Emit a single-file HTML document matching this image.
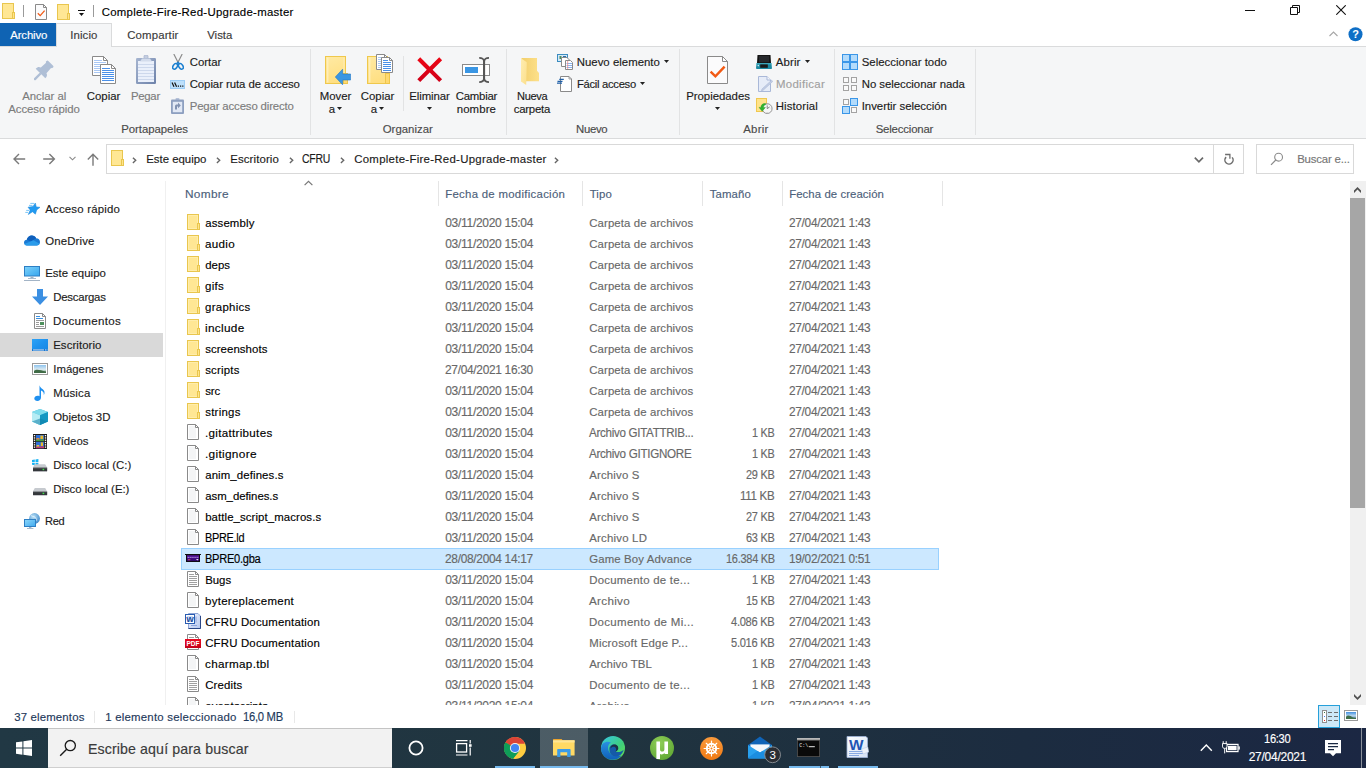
<!DOCTYPE html>
<html lang="es"><head><meta charset="utf-8"><title>Complete-Fire-Red-Upgrade-master</title>
<style>
html,body{margin:0;padding:0;}
body{width:1366px;height:768px;overflow:hidden;background:#fff;position:relative;font-family:'Liberation Sans',sans-serif;}
#root{position:absolute;left:0;top:0;width:1366px;height:768px;overflow:hidden;}
#root div,#root svg{position:absolute;}
.sec{left:0;top:0;width:0;height:0;}
.t{position:absolute;white-space:pre;line-height:normal;-webkit-text-stroke:0.15px currentColor;}
#list{left:166px;top:181px;width:1184px;height:524px;overflow:hidden;}
#listin{left:-166px;top:-181px;width:1366px;height:768px;}
</style></head><body><div id="root">
<div class="sec" id="titlebar">
<span class="t" style="left:101.70px;top:6px;font-size:11.4px;color:#000;letter-spacing:0.282px;">Complete-Fire-Red-Upgrade-master</span>
<svg style="left:2px;top:3px" width="13" height="16" viewBox="0 0 13 16" ><rect x="0.5" y="0.5" width="11" height="15" fill="#ffe794" stroke="#e9c64e"/><rect x="10.5" y="9.5" width="2" height="6" fill="#ffe48a" stroke="#e9c64e"/></svg>
<div style="left:23px;top:5px;width:1px;height:12px;background:#9a9a9a"></div>
<svg style="left:35px;top:4px" width="12" height="16" viewBox="0 0 12 16" ><path d="M0.5 0.5H8.5L11.5 3.5V15.5H0.5Z" fill="#fbfbfc" stroke="#8a8a8a"/><path d="M8.5 0.5V3.5H11.5Z" fill="#fff" stroke="#8a8a8a" stroke-linejoin="round"/><path d="M2.8 9.2L5.2 11.6L9.6 6.6" fill="none" stroke="#f25a14" stroke-width="1.3"/></svg>
<svg style="left:57px;top:4px" width="13" height="16" viewBox="0 0 13 16" ><rect x="0.5" y="0.5" width="11" height="15" fill="#ffe794" stroke="#e9c64e"/><rect x="10.5" y="9.5" width="2" height="6" fill="#ffe48a" stroke="#e9c64e"/></svg>
<div style="left:78px;top:10px;width:7px;height:1px;background:#111"></div>
<svg style="left:79px;top:13px" width="5" height="3" viewBox="0 0 5 3" ><path d="M0 0H5L2.5 3Z" fill="#111"/></svg>
<div style="left:93px;top:5px;width:1px;height:12px;background:#9a9a9a"></div>
<div style="left:1245px;top:10px;width:10px;height:1px;background:#111"></div>
<svg style="left:1290px;top:5px" width="10" height="10" viewBox="0 0 10 10" ><path d="M0.5 2.5H7.5V9.5H0.5Z" fill="none" stroke="#111"/><path d="M2.5 2.5V0.5H9.5V7.5H7.5" fill="none" stroke="#111"/></svg>
<svg style="left:1336px;top:5px" width="10" height="10" viewBox="0 0 10 10" ><path d="M0.3 0.3L9.7 9.7M9.7 0.3L0.3 9.7" stroke="#111" stroke-width="1.1"/></svg>
</div>
<div class="sec" id="ribbon">
<div style="left:0px;top:23px;width:56px;height:23px;background:#0f63b3;"></div>
<div style="left:0px;top:46px;width:1366px;height:1px;background:#dadbdc;"></div>
<div style="left:0px;top:47px;width:1366px;height:91px;background:#f5f6f7;"></div>
<div style="left:56px;top:23px;width:56px;height:24px;background:#f5f6f7;border:1px solid #dadbdc;border-bottom:none;box-sizing:border-box;"></div>
<div style="left:0px;top:138px;width:1366px;height:1px;background:#dadbdc;"></div>
<div style="left:310px;top:49px;width:1px;height:86px;background:#e2e3e4;"></div>
<div style="left:506px;top:49px;width:1px;height:86px;background:#e2e3e4;"></div>
<div style="left:679px;top:49px;width:1px;height:86px;background:#e2e3e4;"></div>
<div style="left:834px;top:49px;width:1px;height:86px;background:#e2e3e4;"></div>
<div style="left:975px;top:49px;width:1px;height:86px;background:#e2e3e4;"></div>
<div style="left:403px;top:56px;width:1px;height:55px;background:#e2e3e4;"></div>
<span class="t" style="left:10.20px;top:29px;font-size:11.4px;color:#fff;letter-spacing:-0.131px;">Archivo</span>
<span class="t" style="left:70.20px;top:29px;font-size:11.4px;color:#3a3a3a;letter-spacing:0.121px;">Inicio</span>
<span class="t" style="left:127.20px;top:29px;font-size:11.4px;color:#3a3a3a;letter-spacing:0.148px;">Compartir</span>
<span class="t" style="left:207.20px;top:29px;font-size:11.4px;color:#3a3a3a;letter-spacing:0.019px;">Vista</span>
<span class="t" style="left:22.20px;top:90px;font-size:11.4px;color:#7c7c7c;letter-spacing:-0.016px;">Anclar al</span>
<span class="t" style="left:8.20px;top:103px;font-size:11.4px;color:#7c7c7c;letter-spacing:-0.041px;">Acceso rápido</span>
<span class="t" style="left:86.70px;top:90px;font-size:11.4px;color:#1b1b1b;letter-spacing:0.028px;">Copiar</span>
<span class="t" style="left:131.20px;top:90px;font-size:11.4px;color:#7c7c7c;letter-spacing:-0.3px;transform:scaleX(0.9998);transform-origin:0 0;">Pegar</span>
<span class="t" style="left:189.70px;top:56px;font-size:11.4px;color:#1b1b1b;letter-spacing:0.009px;">Cortar</span>
<span class="t" style="left:189.70px;top:78px;font-size:11.4px;color:#1b1b1b;letter-spacing:-0.062px;">Copiar ruta de acceso</span>
<span class="t" style="left:189.70px;top:100px;font-size:11.4px;color:#7c7c7c;letter-spacing:-0.148px;">Pegar acceso directo</span>
<span class="t" style="left:121.20px;top:123px;font-size:11.4px;color:#4a4a4a;letter-spacing:-0.04px;">Portapapeles</span>
<span class="t" style="left:319.70px;top:90px;font-size:11.4px;color:#1b1b1b;letter-spacing:0.011px;">Mover</span>
<span class="t" style="left:328.70px;top:103px;font-size:11.4px;color:#1b1b1b;">a</span>
<span class="t" style="left:360.70px;top:90px;font-size:11.4px;color:#1b1b1b;letter-spacing:0.028px;">Copiar</span>
<span class="t" style="left:370.70px;top:103px;font-size:11.4px;color:#1b1b1b;">a</span>
<span class="t" style="left:409.20px;top:90px;font-size:11.4px;color:#1b1b1b;letter-spacing:-0.065px;">Eliminar</span>
<span class="t" style="left:455.70px;top:90px;font-size:11.4px;color:#1b1b1b;letter-spacing:-0.224px;">Cambiar</span>
<span class="t" style="left:456.70px;top:103px;font-size:11.4px;color:#1b1b1b;letter-spacing:0.115px;">nombre</span>
<span class="t" style="left:382.70px;top:123px;font-size:11.4px;color:#4a4a4a;letter-spacing:0.023px;">Organizar</span>
<span class="t" style="left:516.70px;top:90px;font-size:11.4px;color:#1b1b1b;letter-spacing:-0.3px;transform:scaleX(0.9673);transform-origin:0 0;">Nueva</span>
<span class="t" style="left:513.70px;top:103px;font-size:11.4px;color:#1b1b1b;letter-spacing:-0.217px;">carpeta</span>
<span class="t" style="left:576.70px;top:56px;font-size:11.4px;color:#1b1b1b;letter-spacing:0.019px;">Nuevo elemento</span>
<span class="t" style="left:576.70px;top:78px;font-size:11.4px;color:#1b1b1b;letter-spacing:-0.3px;transform:scaleX(0.9865);transform-origin:0 0;">Fácil acceso</span>
<span class="t" style="left:575.70px;top:123px;font-size:11.4px;color:#4a4a4a;letter-spacing:-0.3px;transform:scaleX(0.9988);transform-origin:0 0;">Nuevo</span>
<span class="t" style="left:686.20px;top:90px;font-size:11.4px;color:#1b1b1b;letter-spacing:-0.027px;">Propiedades</span>
<span class="t" style="left:775.70px;top:56px;font-size:11.4px;color:#1b1b1b;letter-spacing:0.159px;">Abrir</span>
<span class="t" style="left:775.70px;top:78px;font-size:11.4px;color:#a0a0a0;letter-spacing:0.3px;transform:scaleX(1.0017);transform-origin:0 0;">Modificar</span>
<span class="t" style="left:775.70px;top:100px;font-size:11.4px;color:#1b1b1b;letter-spacing:0.13px;">Historial</span>
<span class="t" style="left:743.20px;top:123px;font-size:11.4px;color:#4a4a4a;letter-spacing:0.284px;">Abrir</span>
<span class="t" style="left:861.70px;top:56px;font-size:11.4px;color:#1b1b1b;letter-spacing:0.023px;">Seleccionar todo</span>
<span class="t" style="left:861.70px;top:78px;font-size:11.4px;color:#1b1b1b;letter-spacing:-0.037px;">No seleccionar nada</span>
<span class="t" style="left:861.70px;top:100px;font-size:11.4px;color:#1b1b1b;letter-spacing:-0.016px;">Invertir selección</span>
<span class="t" style="left:875.70px;top:123px;font-size:11.4px;color:#4a4a4a;letter-spacing:-0.183px;">Seleccionar</span>
<svg style="left:1329px;top:31px" width="9" height="6" viewBox="0 0 9 6" ><path d="M0.5 5L4.5 1L8.5 5" fill="none" stroke="#a6a6a6" stroke-width="1.1"/></svg>
<svg style="left:1347.5px;top:27px" width="15" height="15" viewBox="0 0 15 15" ><circle cx="7.5" cy="7.2" r="7" fill="#0f6fc6"/><text x="7.5" y="11.2" text-anchor="middle" font-family="Liberation Sans,sans-serif" font-weight="bold" font-size="11" fill="#fff">?</text></svg>
<svg style="left:34px;top:60px" width="24" height="24" viewBox="0 0 24 24" ><g transform="translate(16.7,3.3) rotate(45)" fill="#afbfd6"><rect x="-4.6" y="0" width="9.2" height="3" rx="1.2"/><path d="M-3.6 2.5H3.6L4 10C5.8 10.5 6.8 11.8 6.8 14.4H-6.8C-6.8 11.8 -5.8 10.5 -4 10Z"/><rect x="-1.2" y="14" width="2.4" height="9.4" rx="1.1"/></g></svg>
<svg style="left:92px;top:56px" width="24" height="28" viewBox="0 0 24 28" ><path d="M0.5 0.5H11.5L15.5 4.5V19.5H0.5Z" fill="#fff" stroke="#8a8a8a"/><path d="M11.5 0.5V4.5H15.5Z" fill="#fff" stroke="#8a8a8a" stroke-linejoin="round"/><path d="M2 4.5H10M2 6.5H14M2 8.5H14M2 10.5H14M2 12.5H14M2 14.5H14M2 16.5H14" stroke="#a9c8f5" fill="none"/><path d="M8.5 8.5H19.5L23.5 12.5V27.5H8.5Z" fill="#fff" stroke="#8a8a8a"/><path d="M19.5 8.5V12.5H23.5Z" fill="#fff" stroke="#8a8a8a" stroke-linejoin="round"/><path d="M10 12.5H18M10 14.5H22M10 16.5H22M10 18.5H22M10 20.5H22M10 22.5H22M10 24.5H22" stroke="#4a90e8" fill="none"/></svg>
<svg style="left:136px;top:55px" width="20" height="29" viewBox="0 0 20 29" ><defs><linearGradient id="pb" x1="0" y1="0" x2="1" y2="1"><stop offset="0" stop-color="#a6b5d0"/><stop offset="1" stop-color="#6d82aa"/></linearGradient></defs><rect x="8" y="0" width="4" height="4" rx="1.5" fill="#c3cde0" stroke="#a3b1cb" stroke-width="0.8"/><rect x="0" y="3" width="20" height="26" rx="1.2" fill="url(#pb)"/><rect x="2" y="6" width="16" height="21" fill="#eaf0fb"/><path d="M2 9.5H18M2 12.5H18M2 15.5H18M2 18.5H18M2 21.5H18M2 24.5H18" stroke="#cdd8ec" fill="none"/><path d="M4 6.5L6 3.5H14L16 6.5Z" fill="#d3dcec"/></svg>
<svg style="left:172px;top:54px" width="12" height="16" viewBox="0 0 12 16" ><path d="M1.8 0L6.6 9.6M10.2 0L5.4 9.6" stroke="#8c8c8c" stroke-width="1.2" fill="none"/><ellipse cx="3.1" cy="12.4" rx="2" ry="3" fill="none" stroke="#1a7fd0" stroke-width="1.5" transform="rotate(35 3.1 12.4)"/><ellipse cx="8.9" cy="12.4" rx="2" ry="3" fill="none" stroke="#1a7fd0" stroke-width="1.5" transform="rotate(-35 8.9 12.4)"/><path d="M4.4 9.8L6 8.4L7.6 9.8" stroke="#1a7fd0" stroke-width="1.5" fill="none"/></svg>
<svg style="left:170px;top:80px" width="15" height="9" viewBox="0 0 15 9" ><rect x="0.5" y="0.5" width="14" height="8" fill="#bde0fb" stroke="#9dcdf5"/><path d="M2 2.4L4 6.8M4.6 2.4L6.6 6.8" stroke="#111" stroke-width="1.2"/><path d="M7.8 6.2H9M10 6.2H11.2M12.2 6.2H13.4" stroke="#111" stroke-width="1.2"/></svg>
<svg style="left:171px;top:98px" width="13" height="16" viewBox="0 0 13 16" ><rect x="4.5" y="0" width="4" height="2.4" rx="1" fill="#b5c1d8"/><rect x="0" y="1.5" width="13" height="14.5" rx="1" fill="#8d9fc0"/><rect x="1.8" y="3.8" width="9.4" height="10.4" fill="#e1e8f5"/><path d="M4 11.5V8.2C4 7 4.8 6.4 5.8 6.4H7V4.6L9.8 7.4L7 10.2V8.4H6V11.5Z" fill="#8192b2"/></svg>
<svg style="left:325px;top:56px" width="23" height="28" viewBox="0 0 23 28" ><defs><linearGradient id="bf" x1="0" y1="0" x2="0.3" y2="1"><stop offset="0" stop-color="#ffeaa4"/><stop offset="1" stop-color="#ffdf82"/></linearGradient></defs><rect x="0.5" y="0.5" width="20" height="27" fill="url(#bf)" stroke="#efc84c"/><path d="M2.8 1.5V26.5" stroke="#fff3c9" stroke-width="1"/><path d="M19 1.5V26.5" stroke="#fff0bd" stroke-width="0.8"/><rect x="18.5" y="17.5" width="4" height="10" fill="#ffd970" stroke="#efc64a"/></svg>
<svg style="left:335px;top:69px" width="16" height="16" viewBox="0 0 16 16" ><path d="M0.3 8L7.6 0.2V5H15.6V11H7.6V15.8Z" fill="#3a96e2" stroke="#2277c8" stroke-width="0.6"/></svg>
<svg style="left:367px;top:56px" width="23" height="28" viewBox="0 0 23 28" ><defs><linearGradient id="bf" x1="0" y1="0" x2="0.3" y2="1"><stop offset="0" stop-color="#ffeaa4"/><stop offset="1" stop-color="#ffdf82"/></linearGradient></defs><rect x="0.5" y="0.5" width="20" height="27" fill="url(#bf)" stroke="#efc84c"/><path d="M2.8 1.5V26.5" stroke="#fff3c9" stroke-width="1"/><path d="M19 1.5V26.5" stroke="#fff0bd" stroke-width="0.8"/><rect x="18.5" y="17.5" width="4" height="10" fill="#ffd970" stroke="#efc64a"/></svg>
<svg style="left:376px;top:54px" width="17" height="19" viewBox="0 0 17 19" ><path d="M0.5 0.5H8.5L11.5 3.5V15.5H0.5Z" fill="#fff" stroke="#8a8a8a"/><path d="M8.5 0.5V3.5H11.5Z" fill="#fff" stroke="#8a8a8a" stroke-linejoin="round"/><path d="M2 3.5H6M2 5.5H8M2 7.5H8M2 9.5H8M2 11.5H8M2 13.5H8" stroke="#a9c8f5" fill="none"/><path d="M5.5 3.5H13.5L16.5 6.5V18.5H5.5Z" fill="#fff" stroke="#8a8a8a"/><path d="M13.5 3.5V6.5H16.5Z" fill="#fff" stroke="#8a8a8a" stroke-linejoin="round"/><path d="M7 6.5H12M7 8.5H15M7 10.5H15M7 12.5H15M7 14.5H15M7 16.5H15" stroke="#4a90e8" fill="none"/></svg>
<svg style="left:417px;top:57px" width="26" height="26" viewBox="0 0 26 26" ><defs><linearGradient id="rx" x1="0" y1="0" x2="0" y2="1"><stop offset="0" stop-color="#ee0614"/><stop offset="1" stop-color="#cf0019"/></linearGradient></defs><path d="M3.2 0.3L12.7 9.8L22.2 0.3L25.1 3.2L15.6 12.7L25.1 22.2L22.2 25.1L12.7 15.6L3.2 25.1L0.3 22.2L9.8 12.7L0.3 3.2Z" fill="url(#rx)"/></svg>
<svg style="left:462px;top:57px" width="28" height="26" viewBox="0 0 28 26" ><rect x="0.5" y="7.5" width="27" height="11" fill="#fff" stroke="#8a8a8a"/><rect x="3" y="10" width="13" height="6" fill="#3a96e4"/><rect x="21" y="8" width="2.2" height="10" fill="#f5f6f7" opacity="0.85"/><path d="M17.2 0.9C20 0.9 21.6 1.8 22 4V22C21.6 24.2 20 25.1 17.2 25.1M27 0.9C24.2 0.9 22.6 1.8 22.2 4M22.2 22C22.6 24.2 24.2 25.1 27 25.1" fill="none" stroke="#555" stroke-width="1.7"/><path d="M22.1 3V23" stroke="#555" stroke-width="2"/></svg>
<svg style="left:520.5px;top:58px" width="19" height="27" viewBox="0 0 19 27" ><defs><linearGradient id="nf1" x1="0" y1="0" x2="1" y2="0"><stop offset="0" stop-color="#f2cf6c"/><stop offset="1" stop-color="#fde08a"/></linearGradient><linearGradient id="nf2" x1="0" y1="0" x2="1" y2="1"><stop offset="0" stop-color="#ffedb0"/><stop offset="1" stop-color="#fbdf8c"/></linearGradient></defs><path d="M0.5 0H16V12.8L18 15V23.2H0.5Z" fill="url(#nf1)"/><path d="M0 0.3L5.8 4.2L5.2 27L0 23.4Z" fill="url(#nf2)"/></svg>
<svg style="left:557px;top:54px" width="16" height="16" viewBox="0 0 16 16" ><rect x="0.5" y="0.5" width="10" height="7" fill="#d5e9f7" stroke="#3a8cc0"/><rect x="2.5" y="2" width="2" height="3" fill="#4a8f5c"/><rect x="6" y="2" width="3" height="1.4" fill="#2e6ea8"/><path d="M4.5 3.5H10L12.5 6V12.5H4.5Z" fill="#fff" stroke="#8a8a8a"/><path d="M8.5 6.5H13.5L15.5 8.5V15.5H8.5Z" fill="#fff" stroke="#8a8a8a"/><path d="M9.5 9.5H15M9.5 11.5H15M9.5 13.5H15" stroke="#8ab4ee"/><path d="M10.7 7V15" stroke="#ee8a8a" stroke-width="0.8"/></svg>
<svg style="left:557px;top:76px" width="15" height="16" viewBox="0 0 15 16" ><path d="M3.5 0.5H12L14.5 3V15.5H3.5Z" fill="#fff" stroke="#8a8a8a"/><path d="M12 0.5V3H14.5" fill="none" stroke="#8a8a8a" stroke-width="0.8"/><path d="M2.3 3.4H6.8M0.5 5.3H5.5M0 7.2H5" stroke="#1f5fa8" stroke-width="1.3"/></svg>
<svg style="left:707px;top:56px" width="21" height="28" viewBox="0 0 21 28" ><path d="M0.5 0.5H15.5L20.5 5.5V27.5H0.5Z" fill="#fbfbfc" stroke="#8a8a8a"/><path d="M15.5 0.5V5.5H20.5Z" fill="#fff" stroke="#8a8a8a" stroke-linejoin="round"/><path d="M3.6 15.6L8.4 20.4L17.6 10.6" fill="none" stroke="#f25a14" stroke-width="2.4"/></svg>
<svg style="left:756px;top:55px" width="16" height="14" viewBox="0 0 16 14" ><path d="M1.5 0H14.5L15 8.5H1Z" fill="#141414"/><rect x="3" y="1" width="10" height="6.3" fill="#26282c"/><path d="M0.6 8.3H15.4L16 13.2C16 13.7 15.6 14 15 14H1C0.4 14 0 13.7 0 13.2Z" fill="#1d8aa2"/><rect x="0.4" y="8.3" width="15.2" height="1" fill="#3fb4c8"/><rect x="4.2" y="9.4" width="7.6" height="3.4" fill="#1a1a1a"/><circle cx="2.3" cy="10.6" r="0.8" fill="#cfe9ee"/></svg>
<svg style="left:758px;top:76px" width="15" height="16" viewBox="0 0 15 16" ><path d="M0.5 0.5H9L12.5 4V15.5H0.5Z" fill="#e6ecf8" stroke="#a9b8d8"/><path d="M9 0.5V4H12.5" fill="#f4f7fc" stroke="#a9b8d8"/><path d="M13.6 4.2L14.8 5.4L5.2 14.2L3.4 14.8L4 13Z" fill="#c3cde4" stroke="#aab8d6" stroke-width="0.6"/></svg>
<svg style="left:756px;top:98px" width="17" height="16" viewBox="0 0 17 16" ><rect x="0.5" y="0.5" width="10" height="13" fill="#ffe38a" stroke="#f0c850"/><circle cx="11.2" cy="10.6" r="4.9" fill="#f7f7f7" stroke="#8c8c8c" stroke-width="0.9"/><path d="M11.2 7.4V10.6L13.6 9" fill="none" stroke="#666" stroke-width="0.8"/><path d="M11.2 6.4V7M11.2 14.2V14.8M7 10.6H7.6M14.8 10.6H15.4" stroke="#999" stroke-width="0.7"/><path d="M9.4 5.6C6.8 5.2 5 7 4.9 9.4H3L6.2 13.2L9.4 9.4H7.4C7.6 8 8.2 7 9.8 6.6Z" fill="#2fb52f" stroke="#1f8f1f" stroke-width="0.4"/></svg>
<svg style="left:842px;top:54px" width="16" height="16" viewBox="0 0 16 16" ><rect x="0.5" y="0.5" width="7" height="7" fill="#b3dbfb" stroke="#3a96e8"/><rect x="8.5" y="0.5" width="7" height="7" fill="#b3dbfb" stroke="#3a96e8"/><rect x="0.5" y="8.5" width="7" height="7" fill="#b3dbfb" stroke="#3a96e8"/><rect x="8.5" y="8.5" width="7" height="7" fill="#b3dbfb" stroke="#3a96e8"/></svg>
<svg style="left:842px;top:76px" width="16" height="16" viewBox="0 0 16 16" ><rect x="1.5" y="1.5" width="5" height="5" fill="#fafafa" stroke="#a3a3a3"/><rect x="9.5" y="1.5" width="5" height="5" fill="#fafafa" stroke="#a3a3a3"/><rect x="1.5" y="9.5" width="5" height="5" fill="#fafafa" stroke="#a3a3a3"/><rect x="9.5" y="9.5" width="5" height="5" fill="#fafafa" stroke="#a3a3a3"/></svg>
<svg style="left:842px;top:98px" width="16" height="16" viewBox="0 0 16 16" ><rect x="1.5" y="1.5" width="5" height="5" fill="#fafafa" stroke="#a3a3a3"/><rect x="8.5" y="0.5" width="7" height="7" fill="#b3dbfb" stroke="#3a96e8"/><rect x="0.5" y="8.5" width="7" height="7" fill="#b3dbfb" stroke="#3a96e8"/><rect x="9.5" y="9.5" width="5" height="5" fill="#fafafa" stroke="#a3a3a3"/></svg>
<svg style="left:337px;top:107px" width="5" height="3" viewBox="0 0 5 3" ><path d="M0 0H5L2.5 3Z" fill="#222"/></svg>
<svg style="left:379px;top:107px" width="5" height="3" viewBox="0 0 5 3" ><path d="M0 0H5L2.5 3Z" fill="#222"/></svg>
<svg style="left:427px;top:107px" width="5" height="3" viewBox="0 0 5 3" ><path d="M0 0H5L2.5 3Z" fill="#222"/></svg>
<svg style="left:664px;top:60px" width="5" height="3" viewBox="0 0 5 3" ><path d="M0 0H5L2.5 3Z" fill="#222"/></svg>
<svg style="left:640px;top:82px" width="5" height="3" viewBox="0 0 5 3" ><path d="M0 0H5L2.5 3Z" fill="#222"/></svg>
<svg style="left:715px;top:107px" width="5" height="3" viewBox="0 0 5 3" ><path d="M0 0H5L2.5 3Z" fill="#222"/></svg>
<svg style="left:805px;top:60px" width="5" height="3" viewBox="0 0 5 3" ><path d="M0 0H5L2.5 3Z" fill="#222"/></svg>
</div>
<div class="sec" id="addressbar">
<div style="left:106px;top:144px;width:1138px;height:30px;background:#fff;border:1px solid #d9d9d9;box-sizing:border-box;"></div>
<div style="left:1213px;top:144px;width:1px;height:30px;background:#d9d9d9;"></div>
<div style="left:1256px;top:144px;width:98px;height:30px;background:#fff;border:1px solid #d9d9d9;box-sizing:border-box;"></div>
<span class="t" style="left:146.20px;top:153px;font-size:11.4px;color:#1b1b1b;letter-spacing:0.003px;">Este equipo</span>
<span class="t" style="left:230.20px;top:153px;font-size:11.4px;color:#1b1b1b;letter-spacing:0.135px;">Escritorio</span>
<span class="t" style="left:302.20px;top:152px;font-size:12px;color:#1b1b1b;letter-spacing:-0.3px;transform:scaleX(0.8696);transform-origin:0 0;">CFRU</span>
<span class="t" style="left:354.20px;top:153px;font-size:11.4px;color:#1b1b1b;letter-spacing:0.298px;">Complete-Fire-Red-Upgrade-master</span>
<span class="t" style="left:1297.20px;top:153px;font-size:11.4px;color:#767676;letter-spacing:-0.175px;">Buscar e...</span>
<svg style="left:13px;top:153px" width="13" height="12" viewBox="0 0 13 12" ><path d="M12.2 6H1.2M6 1L1 6L6 11" fill="none" stroke="#7a7a7a" stroke-width="1.4"/></svg>
<svg style="left:43px;top:153px" width="13" height="12" viewBox="0 0 13 12" ><path d="M0.2 6H11.2M6.4 1L11.4 6L6.4 11" fill="none" stroke="#7a7a7a" stroke-width="1.4"/></svg>
<svg style="left:69px;top:156px" width="7" height="5" viewBox="0 0 7 5" ><path d="M0.5 0.8L3.5 3.8L6.5 0.8" fill="none" stroke="#8a8a8a" stroke-width="1.1"/></svg>
<svg style="left:87px;top:153px" width="12" height="13" viewBox="0 0 12 13" ><path d="M6 12.8V1.4M0.8 6.4L6 1.2L11.2 6.4" fill="none" stroke="#7a7a7a" stroke-width="1.4"/></svg>
<svg style="left:111px;top:150px" width="13" height="16" viewBox="0 0 13 16" ><rect x="0.5" y="0.5" width="11" height="15" fill="#ffe794" stroke="#e9c64e"/><rect x="10.5" y="9.5" width="2" height="6" fill="#ffe48a" stroke="#e9c64e"/></svg>
<svg style="left:132px;top:155.5px" width="6" height="8" viewBox="0 0 6 8" ><path d="M0.9 1.7L3.7 4.3L0.9 6.9" fill="none" stroke="#666" stroke-width="1.4"/></svg>
<svg style="left:216px;top:155.5px" width="6" height="8" viewBox="0 0 6 8" ><path d="M0.9 1.7L3.7 4.3L0.9 6.9" fill="none" stroke="#666" stroke-width="1.4"/></svg>
<svg style="left:288.5px;top:155.5px" width="6" height="8" viewBox="0 0 6 8" ><path d="M0.9 1.7L3.7 4.3L0.9 6.9" fill="none" stroke="#666" stroke-width="1.4"/></svg>
<svg style="left:340px;top:155.5px" width="6" height="8" viewBox="0 0 6 8" ><path d="M0.9 1.7L3.7 4.3L0.9 6.9" fill="none" stroke="#666" stroke-width="1.4"/></svg>
<svg style="left:554px;top:155.5px" width="6" height="8" viewBox="0 0 6 8" ><path d="M0.9 1.7L3.7 4.3L0.9 6.9" fill="none" stroke="#666" stroke-width="1.4"/></svg>
<svg style="left:1194px;top:156px" width="10" height="8" viewBox="0 0 10 8" ><path d="M0.8 1.6L4.9 5.8L9 1.6" fill="none" stroke="#6a6a6a" stroke-width="1.7"/></svg>
<svg style="left:1223px;top:153px" width="12" height="12" viewBox="0 0 12 12" ><path d="M9.14 4.36A4.1 4.1 0 1 1 3.1 4.1" fill="none" stroke="#6e6e6e" stroke-width="1.5"/><path d="M2.1 1.5H6.9V5.7" fill="none" stroke="#6e6e6e" stroke-width="1.3"/></svg>
<svg style="left:1270px;top:152px" width="14" height="14" viewBox="0 0 14 14" ><circle cx="8.6" cy="5.2" r="3.9" fill="none" stroke="#8a8a8a" stroke-width="1.1"/><path d="M5.8 8L1 12.8" stroke="#8a8a8a" stroke-width="1.2"/></svg>
</div>
<div class="sec" id="navpane">
<div style="left:0px;top:333px;width:163px;height:24px;background:#d9d9d9;"></div>
<div style="left:165px;top:181px;width:1px;height:524px;background:#f0f0f0;"></div>
<span class="t" style="left:45.20px;top:203px;font-size:11.4px;color:#1b1b1b;letter-spacing:0.209px;">Acceso rápido</span>
<span class="t" style="left:45.20px;top:235px;font-size:11.4px;color:#1b1b1b;letter-spacing:0.154px;">OneDrive</span>
<span class="t" style="left:45.20px;top:267px;font-size:11.4px;color:#1b1b1b;letter-spacing:0.053px;">Este equipo</span>
<span class="t" style="left:53.20px;top:291px;font-size:11.4px;color:#1b1b1b;letter-spacing:-0.219px;">Descargas</span>
<span class="t" style="left:53.20px;top:315px;font-size:11.4px;color:#1b1b1b;letter-spacing:0.3px;transform:scaleX(1.0157);transform-origin:0 0;">Documentos</span>
<span class="t" style="left:53.20px;top:339px;font-size:11.4px;color:#1b1b1b;letter-spacing:0.08px;">Escritorio</span>
<span class="t" style="left:53.20px;top:363px;font-size:11.4px;color:#1b1b1b;letter-spacing:0.024px;">Imágenes</span>
<span class="t" style="left:53.20px;top:387px;font-size:11.4px;color:#1b1b1b;letter-spacing:0.221px;">Música</span>
<span class="t" style="left:53.20px;top:411px;font-size:11.4px;color:#1b1b1b;letter-spacing:0.024px;">Objetos 3D</span>
<span class="t" style="left:53.20px;top:435px;font-size:11.4px;color:#1b1b1b;letter-spacing:-0.054px;">Vídeos</span>
<span class="t" style="left:53.20px;top:459px;font-size:11.4px;color:#1b1b1b;letter-spacing:0.065px;">Disco local (C:)</span>
<span class="t" style="left:53.20px;top:483px;font-size:11.4px;color:#1b1b1b;letter-spacing:-0.026px;">Disco local (E:)</span>
<span class="t" style="left:45.20px;top:515px;font-size:11.4px;color:#1b1b1b;letter-spacing:-0.3px;transform:scaleX(0.9701);transform-origin:0 0;">Red</span>
<svg style="left:24px;top:202px" width="17" height="14" viewBox="0 0 17 14" ><path d="M11.3 1L12.3 4.9L16 5.3L12.7 8L11.4 12.2L8.5 9.8L4.3 12.5L6.2 8L4 5.2L9 4.4Z" fill="#219af0" stroke="#1b86da" stroke-width="0.5" stroke-linejoin="round"/><path d="M6.3 1.4H10M5 3.4H8.5M2.2 8.4H5M1.3 10.4H4.1" stroke="#6cc0f6" stroke-width="0.9" fill="none"/></svg>
<svg style="left:24px;top:235px" width="16" height="11" viewBox="0 0 16 11" ><path d="M3.2 10.5C1.2 10.5 0 9.2 0 7.6C0 6 1.2 4.9 2.8 4.8C3.4 2.2 5.3 0.5 7.8 0.5C9.8 0.5 11.3 1.5 12.1 3.2C14.4 3.2 16 4.7 16 6.9C16 9 14.6 10.5 12.6 10.5Z" fill="#1a7ad4"/><path d="M2.8 4.8C3.4 2.2 5.3 0.5 7.8 0.5C9.8 0.5 11.3 1.5 12.1 3.2L7 6.5Z" fill="#0f5fbc"/><path d="M0.3 9C1 10 2 10.5 3.2 10.5H12.6C14 10.5 15 9.8 15.6 8.8L9.5 5.2Z" fill="#2a9bea"/></svg>
<svg style="left:24px;top:266px" width="16" height="15" viewBox="0 0 16 15" ><defs><linearGradient id="pcg" x1="0" y1="0" x2="1" y2="1"><stop offset="0" stop-color="#7fd2fa"/><stop offset="1" stop-color="#35a6ee"/></linearGradient></defs><rect x="0.5" y="0.5" width="15" height="9.5" fill="url(#pcg)" stroke="#2d7fc4"/><rect x="6.5" y="10.5" width="3" height="1.5" fill="#9fb4c8"/><rect x="4" y="12" width="8" height="0.9" fill="#9fb4c8"/><rect x="0" y="14" width="16" height="1" fill="#a3b4c6"/></svg>
<svg style="left:32px;top:289px" width="16" height="16" viewBox="0 0 16 16" ><path d="M5 0H11V7.5H16L8 16L0 7.5H5Z" fill="#3b8fe2"/></svg>
<svg style="left:34px;top:313px" width="12" height="16" viewBox="0 0 12 16" ><path d="M0.5 0.5H8.5L11.5 3.5V15.5H0.5Z" fill="#fff" stroke="#8a8a8a"/><path d="M8.5 0.5V3.5H11.5Z" fill="#fff" stroke="#8a8a8a" stroke-linejoin="round"/><path d="M2 3.5H6M2 5.5H9" stroke="#3a8fdf"/><path d="M2 7.5H10M2 9.5H5M2 11.5H5M2 13.5H10" stroke="#9a9a9a"/><rect x="6" y="9" width="4" height="3" fill="#4d8f5c"/></svg>
<svg style="left:32px;top:339px" width="16" height="12" viewBox="0 0 16 12" ><defs><linearGradient id="dkg" x1="0" y1="0" x2="1" y2="1"><stop offset="0" stop-color="#2ea3f7"/><stop offset="0.5" stop-color="#1e92ee"/><stop offset="1" stop-color="#1a86e2"/></linearGradient></defs><rect x="0" y="0" width="16" height="12" fill="url(#dkg)"/><rect x="0" y="10" width="16" height="2" fill="#1473cf"/><rect x="1" y="10.5" width="11" height="0.9" fill="#e8f3ff"/><rect x="13" y="10.5" width="1" height="0.9" fill="#e8f3ff"/><rect x="14.5" y="10.5" width="1" height="0.9" fill="#e8f3ff"/></svg>
<svg style="left:32px;top:363px" width="16" height="12" viewBox="0 0 16 12" ><rect x="0.5" y="0.5" width="15" height="11" fill="#fff" stroke="#9a9a9a"/><defs><linearGradient id="img" x1="0" y1="0" x2="0" y2="1"><stop offset="0" stop-color="#8ec4ee"/><stop offset="0.55" stop-color="#dbeaf2"/><stop offset="1" stop-color="#5d8a5a"/></linearGradient></defs><rect x="2" y="2" width="12" height="8" fill="url(#img)"/><path d="M2 8C5 5.5 8 7.5 14 8.5V10H2Z" fill="#3f6b46"/></svg>
<svg style="left:34px;top:385px" width="12" height="16" viewBox="0 0 12 16" ><path d="M5.5 0.2C6 2.2 7.2 3 8.8 4.2C10.6 5.6 11.2 7.6 9.8 10.2C10.2 7.8 9.2 6.2 7 5.4V12.6C7 14.6 5.4 16 3.4 16C1.6 16 0.3 15 0.3 13.6C0.3 12 1.8 10.8 3.6 10.8C4.3 10.8 4.9 10.9 5.5 11.2Z" fill="#1e90f0"/></svg>
<svg style="left:32px;top:409px" width="16" height="16" viewBox="0 0 16 16" ><path d="M8 0L16 3V12.5L8 16L0 12.5V3Z" fill="#35b5d6"/><path d="M8 0L16 3L8 6.2L0 3Z" fill="#7fdcec"/><path d="M0 3L8 6.2V16L0 12.5Z" fill="#b5ecf4"/><path d="M8 6.2L16 3V12.5L8 16Z" fill="#1597c2"/><path d="M0 12.5L8 9.5L16 12.5L8 16Z" fill="#0e7fa8" opacity="0.55"/></svg>
<svg style="left:33px;top:433.7px" width="14" height="15" viewBox="0 0 14 15" ><rect x="0" y="0" width="14" height="15" fill="#1c1c1c"/><rect x="0.8" y="1.0" width="1.4" height="1.3" fill="#fff"/><rect x="11.8" y="1.0" width="1.4" height="1.3" fill="#fff"/><rect x="0.8" y="3.3" width="1.4" height="1.3" fill="#fff"/><rect x="11.8" y="3.3" width="1.4" height="1.3" fill="#fff"/><rect x="0.8" y="5.6" width="1.4" height="1.3" fill="#fff"/><rect x="11.8" y="5.6" width="1.4" height="1.3" fill="#fff"/><rect x="0.8" y="7.9" width="1.4" height="1.3" fill="#fff"/><rect x="11.8" y="7.9" width="1.4" height="1.3" fill="#fff"/><rect x="0.8" y="10.2" width="1.4" height="1.3" fill="#fff"/><rect x="11.8" y="10.2" width="1.4" height="1.3" fill="#fff"/><rect x="0.8" y="12.5" width="1.4" height="1.3" fill="#fff"/><rect x="11.8" y="12.5" width="1.4" height="1.3" fill="#fff"/><rect x="3" y="1" width="8" height="6.2" fill="#2f6fd6"/><rect x="3" y="8" width="8" height="6.2" fill="#2f6fd6"/><rect x="3" y="5.4" width="8" height="1.8" fill="#4a9a3d"/><rect x="3" y="12.4" width="8" height="1.8" fill="#c23b6a"/><rect x="7.4" y="1.6" width="2.8" height="3.4" fill="#e8b82a"/><rect x="7.8" y="8.4" width="2.2" height="3.6" fill="#e8b82a"/><rect x="3.4" y="4" width="3" height="1.6" fill="#d8843a"/><rect x="3.6" y="11" width="2.6" height="1.6" fill="#e0c040"/></svg>
<svg style="left:32px;top:459px" width="16" height="13.2" viewBox="0 0 16 13.2" ><path d="M0 0.9L2.8 0.5V3H0Z M3.5 0.4L6.4 0V3H3.5Z M0 3.7H2.8V6.2L0 5.8Z M3.5 3.7H6.4V6.6L3.5 6.3Z" fill="#19b3f3"/><path d="M2.8 5.2H13.2L15.2 8.6H0.8Z" fill="#c6cacf"/><rect x="1" y="8.5" width="14.2" height="3.9" rx="0.6" fill="#34373b"/><rect x="1" y="8.5" width="14.2" height="0.7" fill="#90959b"/><rect x="1.6" y="12.3" width="13" height="0.6" fill="#c9ccd0"/><rect x="10.6" y="9.8" width="1.6" height="1.4" fill="#3fe64a"/></svg>
<svg style="left:32px;top:488px" width="16" height="8.1" viewBox="0 0 16 8.1" ><path d="M2.8 0.1H13.2L15.2 3.5H0.8Z" fill="#c6cacf"/><rect x="1" y="3.4" width="14.2" height="3.9" rx="0.6" fill="#34373b"/><rect x="1" y="3.4" width="14.2" height="0.7" fill="#90959b"/><rect x="1.6" y="7.199999999999999" width="13" height="0.6" fill="#c9ccd0"/><rect x="10.6" y="4.699999999999999" width="1.6" height="1.4" fill="#3fe64a"/></svg>
<svg style="left:24px;top:513px" width="16" height="16" viewBox="0 0 16 16" ><defs><radialGradient id="ng" cx="0.4" cy="0.35" r="0.7"><stop offset="0" stop-color="#bfe4f8"/><stop offset="1" stop-color="#3a86c8"/></radialGradient><linearGradient id="ng2" x1="0" y1="0" x2="1" y2="1"><stop offset="0" stop-color="#8ed8fb"/><stop offset="1" stop-color="#3fa9ee"/></linearGradient></defs><circle cx="10.5" cy="5.5" r="5.4" fill="url(#ng)"/><path d="M7 2.5C9 4 11 3 12 5.5C13 7 11.5 9 9.5 9.5" fill="none" stroke="#eaf6ff" stroke-width="0.9" opacity="0.8"/><rect x="0.5" y="6.5" width="11" height="7" fill="url(#ng2)" stroke="#2d7fc4"/><rect x="5" y="14" width="2.4" height="1" fill="#9fb4c8"/><rect x="3" y="15" width="6.4" height="0.9" fill="#9fb4c8"/></svg>
</div>
<div class="sec" id="listheader">
<div style="left:438px;top:181px;width:1px;height:25px;background:#e5e5e5;"></div>
<div style="left:582px;top:181px;width:1px;height:25px;background:#e5e5e5;"></div>
<div style="left:702px;top:181px;width:1px;height:25px;background:#e5e5e5;"></div>
<div style="left:782px;top:181px;width:1px;height:25px;background:#e5e5e5;"></div>
<div style="left:942px;top:181px;width:1px;height:25px;background:#e5e5e5;"></div>
<div style="left:181px;top:548px;width:758px;height:22px;background:#cce8ff;border:1px solid #99d1ff;box-sizing:border-box;"></div>
<span class="t" style="left:184.70px;top:188px;font-size:11.4px;color:#4c607a;letter-spacing:0.3px;transform:scaleX(1.0401);transform-origin:0 0;">Nombre</span>
<span class="t" style="left:445.20px;top:188px;font-size:11.4px;color:#4c607a;letter-spacing:0.287px;">Fecha de modificación</span>
<span class="t" style="left:589.70px;top:188px;font-size:11.4px;color:#4c607a;letter-spacing:0.15px;">Tipo</span>
<span class="t" style="left:709.70px;top:188px;font-size:11.4px;color:#4c607a;letter-spacing:0.134px;">Tamaño</span>
<span class="t" style="left:789.20px;top:188px;font-size:11.4px;color:#4c607a;letter-spacing:0.061px;">Fecha de creación</span>
<svg style="left:304px;top:180px" width="9" height="6" viewBox="0 0 9 6" ><path d="M0.6 5.2L4.5 1.3L8.4 5.2" fill="none" stroke="#777" stroke-width="1.2"/></svg>
</div>
<div id="list"><div id="listin">
<span class="t" style="left:205.20px;top:217px;font-size:11.4px;color:#000;letter-spacing:0.154px;">assembly</span>
<span class="t" style="left:445.20px;top:216px;font-size:12px;color:#686868;letter-spacing:-0.289px;">03/11/2020 15:04</span>
<span class="t" style="left:589.20px;top:217px;font-size:11.4px;color:#686868;letter-spacing:0.115px;">Carpeta de archivos</span>
<span class="t" style="left:789.20px;top:216px;font-size:12px;color:#686868;letter-spacing:-0.3px;transform:scaleX(0.9897);transform-origin:0 0;">27/04/2021 1:43</span>
<span class="t" style="left:205.20px;top:238px;font-size:11.4px;color:#000;letter-spacing:0.3px;transform:scaleX(1.0215);transform-origin:0 0;">audio</span>
<span class="t" style="left:445.20px;top:237px;font-size:12px;color:#686868;letter-spacing:-0.289px;">03/11/2020 15:04</span>
<span class="t" style="left:589.20px;top:238px;font-size:11.4px;color:#686868;letter-spacing:0.115px;">Carpeta de archivos</span>
<span class="t" style="left:789.20px;top:237px;font-size:12px;color:#686868;letter-spacing:-0.3px;transform:scaleX(0.9897);transform-origin:0 0;">27/04/2021 1:43</span>
<span class="t" style="left:205.20px;top:259px;font-size:11.4px;color:#000;letter-spacing:0.032px;">deps</span>
<span class="t" style="left:445.20px;top:258px;font-size:12px;color:#686868;letter-spacing:-0.289px;">03/11/2020 15:04</span>
<span class="t" style="left:589.20px;top:259px;font-size:11.4px;color:#686868;letter-spacing:0.115px;">Carpeta de archivos</span>
<span class="t" style="left:789.20px;top:258px;font-size:12px;color:#686868;letter-spacing:-0.3px;transform:scaleX(0.9897);transform-origin:0 0;">27/04/2021 1:43</span>
<span class="t" style="left:205.20px;top:280px;font-size:11.4px;color:#000;letter-spacing:0.3px;transform:scaleX(1.0089);transform-origin:0 0;">gifs</span>
<span class="t" style="left:445.20px;top:279px;font-size:12px;color:#686868;letter-spacing:-0.289px;">03/11/2020 15:04</span>
<span class="t" style="left:589.20px;top:280px;font-size:11.4px;color:#686868;letter-spacing:0.115px;">Carpeta de archivos</span>
<span class="t" style="left:789.20px;top:279px;font-size:12px;color:#686868;letter-spacing:-0.3px;transform:scaleX(0.9897);transform-origin:0 0;">27/04/2021 1:43</span>
<span class="t" style="left:205.20px;top:301px;font-size:11.4px;color:#000;letter-spacing:0.3px;transform:scaleX(1.0008);transform-origin:0 0;">graphics</span>
<span class="t" style="left:445.20px;top:300px;font-size:12px;color:#686868;letter-spacing:-0.289px;">03/11/2020 15:04</span>
<span class="t" style="left:589.20px;top:301px;font-size:11.4px;color:#686868;letter-spacing:0.115px;">Carpeta de archivos</span>
<span class="t" style="left:789.20px;top:300px;font-size:12px;color:#686868;letter-spacing:-0.3px;transform:scaleX(0.9897);transform-origin:0 0;">27/04/2021 1:43</span>
<span class="t" style="left:205.20px;top:322px;font-size:11.4px;color:#000;letter-spacing:0.3px;transform:scaleX(1.034);transform-origin:0 0;">include</span>
<span class="t" style="left:445.20px;top:321px;font-size:12px;color:#686868;letter-spacing:-0.289px;">03/11/2020 15:04</span>
<span class="t" style="left:589.20px;top:322px;font-size:11.4px;color:#686868;letter-spacing:0.115px;">Carpeta de archivos</span>
<span class="t" style="left:789.20px;top:321px;font-size:12px;color:#686868;letter-spacing:-0.3px;transform:scaleX(0.9897);transform-origin:0 0;">27/04/2021 1:43</span>
<span class="t" style="left:205.20px;top:343px;font-size:11.4px;color:#000;letter-spacing:0.078px;">screenshots</span>
<span class="t" style="left:445.20px;top:342px;font-size:12px;color:#686868;letter-spacing:-0.289px;">03/11/2020 15:04</span>
<span class="t" style="left:589.20px;top:343px;font-size:11.4px;color:#686868;letter-spacing:0.115px;">Carpeta de archivos</span>
<span class="t" style="left:789.20px;top:342px;font-size:12px;color:#686868;letter-spacing:-0.3px;transform:scaleX(0.9897);transform-origin:0 0;">27/04/2021 1:43</span>
<span class="t" style="left:205.20px;top:364px;font-size:11.4px;color:#000;letter-spacing:0.213px;">scripts</span>
<span class="t" style="left:445.20px;top:363px;font-size:12px;color:#686868;letter-spacing:-0.3px;transform:scaleX(0.9919);transform-origin:0 0;">27/04/2021 16:30</span>
<span class="t" style="left:589.20px;top:364px;font-size:11.4px;color:#686868;letter-spacing:0.115px;">Carpeta de archivos</span>
<span class="t" style="left:789.20px;top:363px;font-size:12px;color:#686868;letter-spacing:-0.3px;transform:scaleX(0.9897);transform-origin:0 0;">27/04/2021 1:43</span>
<span class="t" style="left:205.20px;top:385px;font-size:11.4px;color:#000;letter-spacing:-0.094px;">src</span>
<span class="t" style="left:445.20px;top:384px;font-size:12px;color:#686868;letter-spacing:-0.289px;">03/11/2020 15:04</span>
<span class="t" style="left:589.20px;top:385px;font-size:11.4px;color:#686868;letter-spacing:0.115px;">Carpeta de archivos</span>
<span class="t" style="left:789.20px;top:384px;font-size:12px;color:#686868;letter-spacing:-0.3px;transform:scaleX(0.9897);transform-origin:0 0;">27/04/2021 1:43</span>
<span class="t" style="left:205.20px;top:406px;font-size:11.4px;color:#000;letter-spacing:0.273px;">strings</span>
<span class="t" style="left:445.20px;top:405px;font-size:12px;color:#686868;letter-spacing:-0.289px;">03/11/2020 15:04</span>
<span class="t" style="left:589.20px;top:406px;font-size:11.4px;color:#686868;letter-spacing:0.115px;">Carpeta de archivos</span>
<span class="t" style="left:789.20px;top:405px;font-size:12px;color:#686868;letter-spacing:-0.3px;transform:scaleX(0.9897);transform-origin:0 0;">27/04/2021 1:43</span>
<span class="t" style="left:205.20px;top:427px;font-size:11.4px;color:#000;letter-spacing:0.3px;transform:scaleX(1.0188);transform-origin:0 0;">.gitattributes</span>
<span class="t" style="left:445.20px;top:426px;font-size:12px;color:#686868;letter-spacing:-0.289px;">03/11/2020 15:04</span>
<span class="t" style="left:589.20px;top:426px;font-size:12px;color:#686868;letter-spacing:-0.3px;transform:scaleX(0.9647);transform-origin:0 0;">Archivo GITATTRIB...</span>
<span class="t" style="left:752.20px;top:426px;font-size:12px;color:#686868;letter-spacing:-0.3px;transform:scaleX(0.9038);transform-origin:0 0;">1 KB</span>
<span class="t" style="left:789.20px;top:426px;font-size:12px;color:#686868;letter-spacing:-0.3px;transform:scaleX(0.9897);transform-origin:0 0;">27/04/2021 1:43</span>
<span class="t" style="left:205.20px;top:448px;font-size:11.4px;color:#000;letter-spacing:0.3px;transform:scaleX(1.0392);transform-origin:0 0;">.gitignore</span>
<span class="t" style="left:445.20px;top:447px;font-size:12px;color:#686868;letter-spacing:-0.289px;">03/11/2020 15:04</span>
<span class="t" style="left:589.20px;top:447px;font-size:12px;color:#686868;letter-spacing:-0.3px;transform:scaleX(0.9699);transform-origin:0 0;">Archivo GITIGNORE</span>
<span class="t" style="left:752.20px;top:447px;font-size:12px;color:#686868;letter-spacing:-0.3px;transform:scaleX(0.9038);transform-origin:0 0;">1 KB</span>
<span class="t" style="left:789.20px;top:447px;font-size:12px;color:#686868;letter-spacing:-0.3px;transform:scaleX(0.9897);transform-origin:0 0;">27/04/2021 1:43</span>
<span class="t" style="left:205.20px;top:469px;font-size:11.4px;color:#000;letter-spacing:0.121px;">anim_defines.s</span>
<span class="t" style="left:445.20px;top:468px;font-size:12px;color:#686868;letter-spacing:-0.289px;">03/11/2020 15:04</span>
<span class="t" style="left:589.20px;top:469px;font-size:11.4px;color:#686868;letter-spacing:0.181px;">Archivo S</span>
<span class="t" style="left:746.20px;top:468px;font-size:12px;color:#686868;letter-spacing:-0.3px;transform:scaleX(0.911);transform-origin:0 0;">29 KB</span>
<span class="t" style="left:789.20px;top:468px;font-size:12px;color:#686868;letter-spacing:-0.3px;transform:scaleX(0.9897);transform-origin:0 0;">27/04/2021 1:43</span>
<span class="t" style="left:205.20px;top:490px;font-size:11.4px;color:#000;letter-spacing:-0.038px;">asm_defines.s</span>
<span class="t" style="left:445.20px;top:489px;font-size:12px;color:#686868;letter-spacing:-0.289px;">03/11/2020 15:04</span>
<span class="t" style="left:589.20px;top:490px;font-size:11.4px;color:#686868;letter-spacing:0.181px;">Archivo S</span>
<span class="t" style="left:740.20px;top:489px;font-size:12px;color:#686868;letter-spacing:-0.3px;transform:scaleX(0.9614);transform-origin:0 0;">111 KB</span>
<span class="t" style="left:789.20px;top:489px;font-size:12px;color:#686868;letter-spacing:-0.3px;transform:scaleX(0.9897);transform-origin:0 0;">27/04/2021 1:43</span>
<span class="t" style="left:205.20px;top:511px;font-size:11.4px;color:#000;letter-spacing:0.093px;">battle_script_macros.s</span>
<span class="t" style="left:445.20px;top:510px;font-size:12px;color:#686868;letter-spacing:-0.289px;">03/11/2020 15:04</span>
<span class="t" style="left:589.20px;top:511px;font-size:11.4px;color:#686868;letter-spacing:0.181px;">Archivo S</span>
<span class="t" style="left:746.20px;top:510px;font-size:12px;color:#686868;letter-spacing:-0.3px;transform:scaleX(0.911);transform-origin:0 0;">27 KB</span>
<span class="t" style="left:789.20px;top:510px;font-size:12px;color:#686868;letter-spacing:-0.3px;transform:scaleX(0.9897);transform-origin:0 0;">27/04/2021 1:43</span>
<span class="t" style="left:205.20px;top:531px;font-size:12px;color:#000;letter-spacing:-0.3px;transform:scaleX(0.9091);transform-origin:0 0;">BPRE.ld</span>
<span class="t" style="left:445.20px;top:531px;font-size:12px;color:#686868;letter-spacing:-0.289px;">03/11/2020 15:04</span>
<span class="t" style="left:589.20px;top:532px;font-size:11.4px;color:#686868;letter-spacing:0.22px;">Archivo LD</span>
<span class="t" style="left:746.20px;top:531px;font-size:12px;color:#686868;letter-spacing:-0.3px;transform:scaleX(0.911);transform-origin:0 0;">63 KB</span>
<span class="t" style="left:789.20px;top:531px;font-size:12px;color:#686868;letter-spacing:-0.3px;transform:scaleX(0.9897);transform-origin:0 0;">27/04/2021 1:43</span>
<span class="t" style="left:205.20px;top:552px;font-size:12px;color:#000;letter-spacing:-0.3px;transform:scaleX(0.9234);transform-origin:0 0;">BPRE0.gba</span>
<span class="t" style="left:445.20px;top:552px;font-size:12px;color:#686868;letter-spacing:-0.3px;transform:scaleX(0.9919);transform-origin:0 0;">28/08/2004 14:17</span>
<span class="t" style="left:589.20px;top:553px;font-size:11.4px;color:#686868;letter-spacing:0.134px;">Game Boy Advance</span>
<span class="t" style="left:725.70px;top:552px;font-size:12px;color:#686868;letter-spacing:-0.3px;transform:scaleX(0.9171);transform-origin:0 0;">16.384 KB</span>
<span class="t" style="left:789.20px;top:552px;font-size:12px;color:#686868;letter-spacing:-0.3px;transform:scaleX(0.9897);transform-origin:0 0;">19/02/2021 0:51</span>
<span class="t" style="left:205.20px;top:574px;font-size:11.4px;color:#000;letter-spacing:-0.023px;">Bugs</span>
<span class="t" style="left:445.20px;top:573px;font-size:12px;color:#686868;letter-spacing:-0.289px;">03/11/2020 15:04</span>
<span class="t" style="left:589.20px;top:574px;font-size:11.4px;color:#686868;letter-spacing:0.262px;">Documento de te...</span>
<span class="t" style="left:752.20px;top:573px;font-size:12px;color:#686868;letter-spacing:-0.3px;transform:scaleX(0.9038);transform-origin:0 0;">1 KB</span>
<span class="t" style="left:789.20px;top:573px;font-size:12px;color:#686868;letter-spacing:-0.3px;transform:scaleX(0.9897);transform-origin:0 0;">27/04/2021 1:43</span>
<span class="t" style="left:205.20px;top:595px;font-size:11.4px;color:#000;letter-spacing:0.3px;transform:scaleX(1.0043);transform-origin:0 0;">bytereplacement</span>
<span class="t" style="left:445.20px;top:594px;font-size:12px;color:#686868;letter-spacing:-0.289px;">03/11/2020 15:04</span>
<span class="t" style="left:589.20px;top:595px;font-size:11.4px;color:#686868;letter-spacing:0.3px;transform:scaleX(1.023);transform-origin:0 0;">Archivo</span>
<span class="t" style="left:746.20px;top:594px;font-size:12px;color:#686868;letter-spacing:-0.3px;transform:scaleX(0.911);transform-origin:0 0;">15 KB</span>
<span class="t" style="left:789.20px;top:594px;font-size:12px;color:#686868;letter-spacing:-0.3px;transform:scaleX(0.9897);transform-origin:0 0;">27/04/2021 1:43</span>
<span class="t" style="left:205.20px;top:616px;font-size:11.4px;color:#000;letter-spacing:0.193px;">CFRU Documentation</span>
<span class="t" style="left:445.20px;top:615px;font-size:12px;color:#686868;letter-spacing:-0.289px;">03/11/2020 15:04</span>
<span class="t" style="left:589.20px;top:616px;font-size:11.4px;color:#686868;letter-spacing:0.3px;transform:scaleX(1.008);transform-origin:0 0;">Documento de Mi...</span>
<span class="t" style="left:731.20px;top:615px;font-size:12px;color:#686868;letter-spacing:-0.3px;transform:scaleX(0.9244);transform-origin:0 0;">4.086 KB</span>
<span class="t" style="left:789.20px;top:615px;font-size:12px;color:#686868;letter-spacing:-0.3px;transform:scaleX(0.9897);transform-origin:0 0;">27/04/2021 1:43</span>
<span class="t" style="left:205.20px;top:637px;font-size:11.4px;color:#000;letter-spacing:0.193px;">CFRU Documentation</span>
<span class="t" style="left:445.20px;top:636px;font-size:12px;color:#686868;letter-spacing:-0.289px;">03/11/2020 15:04</span>
<span class="t" style="left:589.20px;top:637px;font-size:11.4px;color:#686868;letter-spacing:0.219px;">Microsoft Edge P...</span>
<span class="t" style="left:731.20px;top:636px;font-size:12px;color:#686868;letter-spacing:-0.3px;transform:scaleX(0.9244);transform-origin:0 0;">5.016 KB</span>
<span class="t" style="left:789.20px;top:636px;font-size:12px;color:#686868;letter-spacing:-0.3px;transform:scaleX(0.9897);transform-origin:0 0;">27/04/2021 1:43</span>
<span class="t" style="left:205.20px;top:658px;font-size:11.4px;color:#000;letter-spacing:0.3px;transform:scaleX(1.0269);transform-origin:0 0;">charmap.tbl</span>
<span class="t" style="left:445.20px;top:657px;font-size:12px;color:#686868;letter-spacing:-0.289px;">03/11/2020 15:04</span>
<span class="t" style="left:589.20px;top:658px;font-size:11.4px;color:#686868;letter-spacing:0.086px;">Archivo TBL</span>
<span class="t" style="left:752.20px;top:657px;font-size:12px;color:#686868;letter-spacing:-0.3px;transform:scaleX(0.9038);transform-origin:0 0;">1 KB</span>
<span class="t" style="left:789.20px;top:657px;font-size:12px;color:#686868;letter-spacing:-0.3px;transform:scaleX(0.9897);transform-origin:0 0;">27/04/2021 1:43</span>
<span class="t" style="left:205.20px;top:679px;font-size:11.4px;color:#000;letter-spacing:0.168px;">Credits</span>
<span class="t" style="left:445.20px;top:678px;font-size:12px;color:#686868;letter-spacing:-0.289px;">03/11/2020 15:04</span>
<span class="t" style="left:589.20px;top:679px;font-size:11.4px;color:#686868;letter-spacing:0.262px;">Documento de te...</span>
<span class="t" style="left:752.20px;top:678px;font-size:12px;color:#686868;letter-spacing:-0.3px;transform:scaleX(0.9038);transform-origin:0 0;">1 KB</span>
<span class="t" style="left:789.20px;top:678px;font-size:12px;color:#686868;letter-spacing:-0.3px;transform:scaleX(0.9897);transform-origin:0 0;">27/04/2021 1:43</span>
<span class="t" style="left:205.20px;top:700px;font-size:11.4px;color:#000;letter-spacing:0.174px;">eventscripts</span>
<span class="t" style="left:445.20px;top:699px;font-size:12px;color:#686868;letter-spacing:-0.289px;">03/11/2020 15:04</span>
<span class="t" style="left:589.20px;top:700px;font-size:11.4px;color:#686868;letter-spacing:0.3px;transform:scaleX(1.023);transform-origin:0 0;">Archivo</span>
<span class="t" style="left:752.20px;top:699px;font-size:12px;color:#686868;letter-spacing:-0.3px;transform:scaleX(0.9038);transform-origin:0 0;">1 KB</span>
<span class="t" style="left:789.20px;top:699px;font-size:12px;color:#686868;letter-spacing:-0.3px;transform:scaleX(0.9897);transform-origin:0 0;">27/04/2021 1:43</span>
<svg style="left:187px;top:214px" width="13" height="16" viewBox="0 0 13 16" ><rect x="0.5" y="0.5" width="11" height="15" fill="#ffe794" stroke="#e9c64e"/><rect x="1.5" y="1.5" width="9" height="13" fill="none" stroke="#ffedab" stroke-width="1"/><rect x="10.5" y="9.5" width="2" height="6" fill="#ffe48a" stroke="#e9c64e"/></svg>
<svg style="left:187px;top:235px" width="13" height="16" viewBox="0 0 13 16" ><rect x="0.5" y="0.5" width="11" height="15" fill="#ffe794" stroke="#e9c64e"/><rect x="1.5" y="1.5" width="9" height="13" fill="none" stroke="#ffedab" stroke-width="1"/><rect x="10.5" y="9.5" width="2" height="6" fill="#ffe48a" stroke="#e9c64e"/></svg>
<svg style="left:187px;top:256px" width="13" height="16" viewBox="0 0 13 16" ><rect x="0.5" y="0.5" width="11" height="15" fill="#ffe794" stroke="#e9c64e"/><rect x="1.5" y="1.5" width="9" height="13" fill="none" stroke="#ffedab" stroke-width="1"/><rect x="10.5" y="9.5" width="2" height="6" fill="#ffe48a" stroke="#e9c64e"/></svg>
<svg style="left:187px;top:277px" width="13" height="16" viewBox="0 0 13 16" ><rect x="0.5" y="0.5" width="11" height="15" fill="#ffe794" stroke="#e9c64e"/><rect x="1.5" y="1.5" width="9" height="13" fill="none" stroke="#ffedab" stroke-width="1"/><rect x="10.5" y="9.5" width="2" height="6" fill="#ffe48a" stroke="#e9c64e"/></svg>
<svg style="left:187px;top:298px" width="13" height="16" viewBox="0 0 13 16" ><rect x="0.5" y="0.5" width="11" height="15" fill="#ffe794" stroke="#e9c64e"/><rect x="1.5" y="1.5" width="9" height="13" fill="none" stroke="#ffedab" stroke-width="1"/><rect x="10.5" y="9.5" width="2" height="6" fill="#ffe48a" stroke="#e9c64e"/></svg>
<svg style="left:187px;top:319px" width="13" height="16" viewBox="0 0 13 16" ><rect x="0.5" y="0.5" width="11" height="15" fill="#ffe794" stroke="#e9c64e"/><rect x="1.5" y="1.5" width="9" height="13" fill="none" stroke="#ffedab" stroke-width="1"/><rect x="10.5" y="9.5" width="2" height="6" fill="#ffe48a" stroke="#e9c64e"/></svg>
<svg style="left:187px;top:340px" width="13" height="16" viewBox="0 0 13 16" ><rect x="0.5" y="0.5" width="11" height="15" fill="#ffe794" stroke="#e9c64e"/><rect x="1.5" y="1.5" width="9" height="13" fill="none" stroke="#ffedab" stroke-width="1"/><rect x="10.5" y="9.5" width="2" height="6" fill="#ffe48a" stroke="#e9c64e"/></svg>
<svg style="left:187px;top:361px" width="13" height="16" viewBox="0 0 13 16" ><rect x="0.5" y="0.5" width="11" height="15" fill="#ffe794" stroke="#e9c64e"/><rect x="1.5" y="1.5" width="9" height="13" fill="none" stroke="#ffedab" stroke-width="1"/><rect x="10.5" y="9.5" width="2" height="6" fill="#ffe48a" stroke="#e9c64e"/></svg>
<svg style="left:187px;top:382px" width="13" height="16" viewBox="0 0 13 16" ><rect x="0.5" y="0.5" width="11" height="15" fill="#ffe794" stroke="#e9c64e"/><rect x="1.5" y="1.5" width="9" height="13" fill="none" stroke="#ffedab" stroke-width="1"/><rect x="10.5" y="9.5" width="2" height="6" fill="#ffe48a" stroke="#e9c64e"/></svg>
<svg style="left:187px;top:403px" width="13" height="16" viewBox="0 0 13 16" ><rect x="0.5" y="0.5" width="11" height="15" fill="#ffe794" stroke="#e9c64e"/><rect x="1.5" y="1.5" width="9" height="13" fill="none" stroke="#ffedab" stroke-width="1"/><rect x="10.5" y="9.5" width="2" height="6" fill="#ffe48a" stroke="#e9c64e"/></svg>
<svg style="left:187px;top:424px" width="12" height="16" viewBox="0 0 12 16" ><path d="M0.5 0.5H8.5L11.5 3.5V15.5H0.5Z" fill="#fff" stroke="#8a8a8a"/><rect x="2" y="2" width="7" height="12" fill="#f4f5f6"/><path d="M8.5 0.5V3.5H11.5Z" fill="#fff" stroke="#8a8a8a" stroke-linejoin="round"/></svg>
<svg style="left:187px;top:445px" width="12" height="16" viewBox="0 0 12 16" ><path d="M0.5 0.5H8.5L11.5 3.5V15.5H0.5Z" fill="#fff" stroke="#8a8a8a"/><rect x="2" y="2" width="7" height="12" fill="#f4f5f6"/><path d="M8.5 0.5V3.5H11.5Z" fill="#fff" stroke="#8a8a8a" stroke-linejoin="round"/></svg>
<svg style="left:187px;top:466px" width="12" height="16" viewBox="0 0 12 16" ><path d="M0.5 0.5H8.5L11.5 3.5V15.5H0.5Z" fill="#fff" stroke="#8a8a8a"/><rect x="2" y="2" width="7" height="12" fill="#f4f5f6"/><path d="M8.5 0.5V3.5H11.5Z" fill="#fff" stroke="#8a8a8a" stroke-linejoin="round"/></svg>
<svg style="left:187px;top:487px" width="12" height="16" viewBox="0 0 12 16" ><path d="M0.5 0.5H8.5L11.5 3.5V15.5H0.5Z" fill="#fff" stroke="#8a8a8a"/><rect x="2" y="2" width="7" height="12" fill="#f4f5f6"/><path d="M8.5 0.5V3.5H11.5Z" fill="#fff" stroke="#8a8a8a" stroke-linejoin="round"/></svg>
<svg style="left:187px;top:508px" width="12" height="16" viewBox="0 0 12 16" ><path d="M0.5 0.5H8.5L11.5 3.5V15.5H0.5Z" fill="#fff" stroke="#8a8a8a"/><rect x="2" y="2" width="7" height="12" fill="#f4f5f6"/><path d="M8.5 0.5V3.5H11.5Z" fill="#fff" stroke="#8a8a8a" stroke-linejoin="round"/></svg>
<svg style="left:187px;top:529px" width="12" height="16" viewBox="0 0 12 16" ><path d="M0.5 0.5H8.5L11.5 3.5V15.5H0.5Z" fill="#fff" stroke="#8a8a8a"/><rect x="2" y="2" width="7" height="12" fill="#f4f5f6"/><path d="M8.5 0.5V3.5H11.5Z" fill="#fff" stroke="#8a8a8a" stroke-linejoin="round"/></svg>
<svg style="left:185px;top:554px" width="16" height="9" viewBox="0 0 16 9" ><rect x="0" y="0" width="16" height="1" fill="#111"/><rect x="1" y="0.5" width="14" height="7.6" rx="0.5" fill="#0b0b0b"/><defs><linearGradient id="gb" x1="0" y1="0" x2="0" y2="1"><stop offset="0" stop-color="#5a12a6"/><stop offset="1" stop-color="#2c0762"/></linearGradient></defs><rect x="2" y="1.3" width="12" height="5.8" fill="url(#gb)"/><path d="M2.6 3.4H13.4" stroke="#b59be0" stroke-width="0.9" stroke-dasharray="1.4 0.5"/><rect x="3" y="5.3" width="2.4" height="0.9" fill="#d8486a"/><path d="M11 4.9H13.6L12.3 6.5Z" fill="#efe8f6"/></svg>
<svg style="left:187px;top:571px" width="12" height="16" viewBox="0 0 12 16" ><path d="M0.5 0.5H8.5L11.5 3.5V15.5H0.5Z" fill="#fff" stroke="#8a8a8a"/><path d="M8.5 0.5V3.5H11.5Z" fill="#fff" stroke="#8a8a8a" stroke-linejoin="round"/><path d="M2 3.5H7M2 5.5H10M2 7.5H10M2 9.5H10M2 11.5H10M2 13.5H10" stroke="#a0a0a0" fill="none"/></svg>
<svg style="left:187px;top:592px" width="12" height="16" viewBox="0 0 12 16" ><path d="M0.5 0.5H8.5L11.5 3.5V15.5H0.5Z" fill="#fff" stroke="#8a8a8a"/><rect x="2" y="2" width="7" height="12" fill="#f4f5f6"/><path d="M8.5 0.5V3.5H11.5Z" fill="#fff" stroke="#8a8a8a" stroke-linejoin="round"/></svg>
<svg style="left:185px;top:613px" width="16" height="16" viewBox="0 0 16 16" ><defs><linearGradient id="wg" x1="0" y1="0" x2="1" y2="1"><stop offset="0" stop-color="#f4f7fe"/><stop offset="1" stop-color="#b4c6ee"/></linearGradient></defs><path d="M3.5 0.5H13L15.5 3V15.5H3.5Z" fill="url(#wg)" stroke="#8fa6d8"/><path d="M3.5 15.5H15.5V3" fill="none" stroke="#2a4686"/><path d="M11 3.5V9.5M6 12.5H12" stroke="#8da4dc" fill="none"/><rect x="0.5" y="1.5" width="9" height="9" fill="#fff" stroke="#2a5cb0"/><rect x="2" y="3" width="6" height="6" fill="#cfe0f8"/><text x="5" y="9" text-anchor="middle" font-family="Liberation Sans,sans-serif" font-weight="bold" font-size="8" fill="#1c4a9c">W</text></svg>
<svg style="left:185px;top:634px" width="16" height="16" viewBox="0 0 16 16" ><path d="M2.5 0.5H10.5L13.5 3.5V15.5H2.5Z" fill="#fff" stroke="#8a8a8a"/><path d="M10.5 0.5V3.5H13.5Z" fill="#fff" stroke="#8a8a8a" stroke-linejoin="round"/><path d="M4 3.5H9" stroke="#a0a0a0"/><defs><linearGradient id="pg" x1="0" y1="0" x2="0" y2="1"><stop offset="0" stop-color="#ea0a22"/><stop offset="1" stop-color="#c40018"/></linearGradient></defs><rect x="0" y="5" width="16" height="9" fill="url(#pg)"/><text x="8" y="12.3" text-anchor="middle" font-family="Liberation Sans,sans-serif" font-weight="bold" font-size="7.5" fill="#fff" textLength="13" lengthAdjust="spacingAndGlyphs">PDF</text></svg>
<svg style="left:187px;top:655px" width="12" height="16" viewBox="0 0 12 16" ><path d="M0.5 0.5H8.5L11.5 3.5V15.5H0.5Z" fill="#fff" stroke="#8a8a8a"/><rect x="2" y="2" width="7" height="12" fill="#f4f5f6"/><path d="M8.5 0.5V3.5H11.5Z" fill="#fff" stroke="#8a8a8a" stroke-linejoin="round"/></svg>
<svg style="left:187px;top:676px" width="12" height="16" viewBox="0 0 12 16" ><path d="M0.5 0.5H8.5L11.5 3.5V15.5H0.5Z" fill="#fff" stroke="#8a8a8a"/><path d="M8.5 0.5V3.5H11.5Z" fill="#fff" stroke="#8a8a8a" stroke-linejoin="round"/><path d="M2 3.5H7M2 5.5H10M2 7.5H10M2 9.5H10M2 11.5H10M2 13.5H10" stroke="#a0a0a0" fill="none"/></svg>
<svg style="left:187px;top:697px" width="12" height="16" viewBox="0 0 12 16" ><path d="M0.5 0.5H8.5L11.5 3.5V15.5H0.5Z" fill="#fff" stroke="#8a8a8a"/><rect x="2" y="2" width="7" height="12" fill="#f4f5f6"/><path d="M8.5 0.5V3.5H11.5Z" fill="#fff" stroke="#8a8a8a" stroke-linejoin="round"/></svg>
</div></div>
<div class="sec" id="scrollbar">
<div style="left:1350px;top:181px;width:16px;height:524px;background:#f0f0f0;"></div>
<div style="left:1350px;top:198px;width:15px;height:310px;background:#a6a6a6;"></div>
<svg style="left:1354px;top:187px" width="7" height="6" viewBox="0 0 7 6" ><path d="M0 6L3.5 2.5L7 6V3.5L3.5 0L0 3.5Z" fill="#505050"/></svg>
<svg style="left:1354px;top:694px" width="7" height="6" viewBox="0 0 7 6" ><path d="M0 0L3.5 3.5L7 0V2.5L3.5 6L0 2.5Z" fill="#505050"/></svg>
</div>
<div class="sec" id="statusbar">
<div style="left:94px;top:711px;width:1px;height:12px;background:#e8e8e8;"></div>
<div style="left:294px;top:711px;width:1px;height:12px;background:#e8e8e8;"></div>
<div style="left:1318px;top:705px;width:22px;height:23px;background:#cde8f7;border:1px solid #26a0da;box-sizing:border-box;"></div>
<span class="t" style="left:14.20px;top:711px;font-size:11.4px;color:#1e395b;letter-spacing:0.164px;">37 elementos</span>
<span class="t" style="left:105.20px;top:711px;font-size:11.4px;color:#1e395b;letter-spacing:0.236px;">1 elemento seleccionado</span>
<span class="t" style="left:243.20px;top:710px;font-size:12px;color:#1e395b;letter-spacing:-0.3px;transform:scaleX(0.937);transform-origin:0 0;">16,0 MB</span>
<svg style="left:1322px;top:710px" width="16" height="13" viewBox="0 0 16 13" ><rect x="0.5" y="0.5" width="4" height="12" fill="#fff" stroke="#8f8f8f"/><rect x="2" y="2" width="1" height="1" fill="#3a7a4a"/><rect x="2" y="6" width="1" height="1" fill="#3a7ef0"/><rect x="2" y="10" width="1" height="1" fill="#e02a2a"/><path d="M6 2.5H10M12 2.5H16M6 6.5H10M12 6.5H16M6 10.5H10M12 10.5H16" stroke="#6e6e6e" stroke-width="1"/></svg>
<svg style="left:1344px;top:710px" width="14" height="11" viewBox="0 0 14 11" ><rect x="0.5" y="0.5" width="13" height="10" fill="#fff" stroke="#9a9a9a"/><defs><linearGradient id="vb" x1="0" y1="0" x2="0" y2="1"><stop offset="0" stop-color="#3f8ee0"/><stop offset="0.55" stop-color="#bcd8ee"/><stop offset="1" stop-color="#2f5f8a"/></linearGradient></defs><rect x="2" y="2" width="10" height="7" fill="url(#vb)"/><path d="M2 7C4 4.5 6 5.5 9 7.5L12 8V9H2Z" fill="#3f6f4a"/></svg>
</div>
<div class="sec" id="taskbar">
<div style="left:0px;top:728px;width:1366px;height:40px;background:linear-gradient(90deg,#213844 0%,#20343f 45%,#1c2c40 75%,#1b2743 100%);"></div>
<div style="left:48px;top:728px;width:344px;height:40px;background:#f2f2f2;border-top:1px solid #c4c4c4;border-bottom:1px solid #cfcfcf;box-sizing:border-box;"></div>
<div style="left:540px;top:728px;width:48px;height:40px;background:rgba(255,255,255,0.2);"></div>
<div style="left:495px;top:766px;width:40px;height:2px;background:#76b9ed;"></div>
<div style="left:540px;top:766px;width:48px;height:2px;background:#76b9ed;"></div>
<div style="left:789px;top:766px;width:31px;height:2px;background:#76b9ed;"></div>
<div style="left:821px;top:766px;width:8px;height:2px;background:#76b9ed;"></div>
<div style="left:838px;top:766px;width:40px;height:2px;background:#76b9ed;"></div>
<div style="left:820px;top:766px;width:1px;height:2px;background:#3d5a73;"></div>
<div style="left:1361px;top:728px;width:1px;height:40px;background:#8a909a;"></div>
<span class="t" style="left:87.90px;top:741px;font-size:14.2px;color:#3b3b3b;letter-spacing:0.12px;">Escribe aquí para buscar</span>
<span class="t" style="left:1264.20px;top:732px;font-size:12px;color:#fff;letter-spacing:-0.3px;transform:scaleX(0.9261);transform-origin:0 0;">16:30</span>
<span class="t" style="left:1248.70px;top:750px;font-size:12px;color:#fff;letter-spacing:-0.262px;">27/04/2021</span>
<svg style="left:16px;top:740px" width="16" height="16" viewBox="0 0 16 16" ><path d="M0 2.3L6.4 1.4V7.6H0Z M7.4 1.25L16 0V7.6H7.4Z M0 8.6H6.4V14.7L0 13.8Z M7.4 8.6H16V16L7.4 14.8Z" fill="#fff"/></svg>
<svg style="left:59px;top:739px" width="18" height="18" viewBox="0 0 18 18" ><circle cx="11.3" cy="6.6" r="5.1" fill="none" stroke="#1a1a1a" stroke-width="1.3"/><path d="M7.7 10.3L1.2 16.8" stroke="#1a1a1a" stroke-width="1.4"/></svg>
<svg style="left:407px;top:739px" width="18" height="18" viewBox="0 0 18 18" ><circle cx="9" cy="9" r="6.6" fill="none" stroke="#fff" stroke-width="1.8"/></svg>
<svg style="left:455px;top:740px" width="17" height="16" viewBox="0 0 17 16" ><path d="M1 0.6H12.5M1 15H12.5" stroke="#fff" stroke-width="1.2" fill="none"/><rect x="1.6" y="3.6" width="10" height="8.4" fill="none" stroke="#fff" stroke-width="1.3"/><path d="M15.2 0V3.4M15.2 7.6V15.6" stroke="#fff" stroke-width="1.2"/><rect x="14" y="4.2" width="2.6" height="2.6" fill="#fff"/></svg>
<svg style="left:504px;top:737px" width="22" height="22" viewBox="0 0 22 22" ><circle cx="11" cy="11" r="11" fill="#ffcd40"/><path d="M1.47 5.50A11 11 0 0 1 20.53 5.50L20.57 6.4H11L6.58 8.45Z" fill="#db4437"/><path d="M1.47 5.50L6.58 8.45L11 6.4H20.57A11 11 0 0 0 1.47 5.50Z" fill="#db4437"/><path d="M1.47 5.50A11 11 0 0 0 11.00 22.00L8.71 21.76L15.42 13.55L6.58 13.55L6.58 8.45Z" fill="#0f9d58"/><path d="M1.29 5.84A11 11 0 0 0 9.09 21.83L15.42 14.10L11 11L6.58 8.45Z" fill="#0f9d58"/><circle cx="11" cy="11" r="5.1" fill="#f1f1f1"/><circle cx="11" cy="11" r="4.1" fill="#4285f4"/></svg>
<svg style="left:553px;top:739px" width="22" height="18" viewBox="0 0 22 18" ><path d="M0 0.6C0 0.3 0.3 0 0.6 0H8.6L9.8 1.6H0Z" fill="#f0a52c"/><rect x="0" y="1.3" width="21.6" height="15.3" rx="0.5" fill="#ffd964"/><rect x="0" y="1.3" width="21.6" height="2.2" fill="#ffe594"/><path d="M4.2 18V11C4.2 10.4 4.6 10 5.2 10H16.6C17.2 10 17.6 10.4 17.6 11V18H14.2V13.3H7.4V18Z" fill="#3a9be8"/></svg>
<svg style="left:601px;top:736px" width="24" height="24" viewBox="0 0 24 24" ><defs><linearGradient id="eg1" x1="0" y1="0" x2="1" y2="1"><stop offset="0" stop-color="#36c6e8"/><stop offset="0.6" stop-color="#3fcf7a"/><stop offset="1" stop-color="#6ee04e"/></linearGradient><linearGradient id="eg2" x1="0" y1="0" x2="0" y2="1"><stop offset="0" stop-color="#2a8fe0"/><stop offset="1" stop-color="#0f5fb8"/></linearGradient></defs><circle cx="12" cy="12" r="12" fill="url(#eg1)"/><path d="M0 12.5C0.5 6 6 4.6 10 6.4C6.5 8.5 6.2 13 8.6 16.4C11 19.8 15.6 21 20.6 19.4C17.6 23.4 11.6 25.2 6 22.4C2 20.2 0 16.4 0 12.5Z" fill="url(#eg2)"/><path d="M8.4 13.6C8.2 10.4 10.4 8.6 13 8.6C16.2 8.6 17.6 11 17 13.2C16.6 14.4 15.4 15 14.6 15.6C16.6 16.6 20.4 16.2 22.6 13.8C21.4 19 16.6 21.6 12.4 20C9.6 18.8 8.4 16.2 8.4 13.6Z" fill="#155aa8"/><path d="M13 8.6C15.6 8.4 17.6 10.2 17.2 12.8C17 13.8 16.2 14.6 15.2 15.2C14.6 15.6 14.4 15.4 14.8 14.8C15.6 13.6 15.2 11.6 13.8 11C12.4 10.4 10.6 11 9.4 12.6C9.6 10.2 11 8.8 13 8.6Z" fill="#1d3144"/></svg>
<svg style="left:650px;top:736px" width="24" height="24" viewBox="0 0 24 24" ><defs><radialGradient id="ug" cx="0.4" cy="0.3" r="0.8"><stop offset="0" stop-color="#8fce58"/><stop offset="1" stop-color="#5da532"/></radialGradient></defs><circle cx="12" cy="12" r="12" fill="url(#ug)"/><path d="M6.4 5.4H10V13.2C10 14.8 10.8 15.6 12.2 15.6C13.6 15.6 14.4 14.8 14.4 13.2V5.4H18V18H14.6V16.8C13.8 17.8 12.8 18.4 11.4 18.4C10.8 18.4 10.4 18.3 10 18.1V23H6.4Z" fill="#fff"/></svg>
<svg style="left:699.5px;top:736.5px" width="23" height="23" viewBox="0 0 23 23" ><defs><linearGradient id="ow" x1="0" y1="0" x2="0" y2="1"><stop offset="0" stop-color="#fa9a3c"/><stop offset="1" stop-color="#f07a14"/></linearGradient></defs><circle cx="11.5" cy="11.5" r="11.4" fill="url(#ow)"/><circle cx="11.5" cy="11.5" r="4.7" fill="none" stroke="#fff" stroke-width="2"/><circle cx="11.5" cy="11.5" r="2.3" fill="#fff"/><circle cx="11.5" cy="11.5" r="1" fill="#f5821f"/><path d="M13.90 11.50L18.90 11.50M13.20 13.20L16.73 16.73M11.50 13.90L11.50 18.90M9.80 13.20L6.27 16.73M9.10 11.50L4.10 11.50M9.80 9.80L6.27 6.27M11.50 9.10L11.50 4.10M13.20 9.80L16.73 6.27" stroke="#fff" stroke-width="1.2" stroke-linecap="round"/></svg>
<svg style="left:748px;top:736px" width="34" height="28" viewBox="0 0 34 28" ><path d="M0 9L12 0.6L24 9V21.6H0Z" fill="#0f64b8"/><path d="M2.4 8.4H21.6V18H2.4Z" fill="#f4f8fc"/><path d="M0 9L12 16.6L24 9V21.6C24 22 23.7 22.4 23.2 22.4H0.8C0.3 22.4 0 22 0 21.6Z" fill="#28a0ee"/><path d="M0 21.8L9.4 14.9L12 16.6L14.6 14.9L24 21.8C24 22.2 23.6 22.4 23.2 22.4H0.8C0.4 22.4 0 22.2 0 21.8Z" fill="#1b8de0"/><circle cx="24.6" cy="18.8" r="7.9" fill="#2a2d33" stroke="#8e9399" stroke-width="0.9"/><text x="24.6" y="23" text-anchor="middle" font-family="Liberation Sans,sans-serif" font-size="11.5" fill="#fff">3</text></svg>
<svg style="left:797px;top:738px" width="23" height="19" viewBox="0 0 23 19" ><rect x="0" y="0" width="23" height="19" fill="#0a0a0a"/><rect x="0" y="0" width="23" height="2.2" fill="#b8b8b8"/><rect x="0.4" y="2.2" width="22.2" height="16.4" fill="none" stroke="#555" stroke-width="0.8"/><text x="2.2" y="9.2" font-family="Liberation Mono,monospace" font-size="5.6" fill="#e8e8e8" textLength="9" lengthAdjust="spacingAndGlyphs">C:\</text><rect x="11.8" y="8.2" width="6" height="1" fill="#e8e8e8"/></svg>
<svg style="left:846px;top:736px" width="23" height="22" viewBox="0 0 23 22" ><defs><linearGradient id="wd" x1="0" y1="0" x2="1" y2="1"><stop offset="0" stop-color="#ffffff"/><stop offset="1" stop-color="#d5e2f6"/></linearGradient></defs><path d="M1 0.5H20L21.5 2V21.5H1Z" fill="url(#wd)" stroke="#9fb4d8" stroke-width="0.8"/><path d="M3 15.5H17M3 17.5H17M3 19.5H13" stroke="#7da2e0" stroke-width="0.9"/><path d="M15.5 13L21.8 11L22.8 16L17 18Z" fill="#eef3fb" stroke="#b5c5e2" stroke-width="0.5"/><text x="10.2" y="13.6" text-anchor="middle" font-family="Liberation Sans,sans-serif" font-weight="bold" font-size="14" fill="#1f55b4" textLength="14.5" lengthAdjust="spacingAndGlyphs">W</text></svg>
<svg style="left:1200px;top:742.5px" width="13" height="9" viewBox="0 0 13 9" ><path d="M0.8 7.8L6.3 2L11.8 7.8" fill="none" stroke="#fff" stroke-width="1.4"/></svg>
<svg style="left:1222px;top:741px" width="18" height="13" viewBox="0 0 18 13" ><rect x="4.6" y="3.4" width="11.4" height="7.2" fill="none" stroke="#fff" stroke-width="1.2"/><rect x="16.4" y="5.4" width="1.4" height="3.2" fill="#fff"/><rect x="6" y="4.8" width="8.6" height="4.4" fill="#fff"/><path d="M1.2 0.2V2.6M4.2 0.2V2.6" stroke="#fff" stroke-width="1"/><path d="M0.4 2.6H5V5.2C5 6.6 4 7.4 2.7 7.4C1.4 7.4 0.4 6.6 0.4 5.2Z" fill="#1b2a40" stroke="#fff" stroke-width="1"/><path d="M2.7 7.6V12.4" stroke="#fff" stroke-width="1"/></svg>
<svg style="left:1325px;top:740px" width="16" height="17" viewBox="0 0 16 17" ><path d="M0 0H16V13.2H11L8 16.2L5 13.2H0Z" fill="#fff"/><path d="M3 3.6H13M3 6.6H13M3 9.6H9" stroke="#1b2942" stroke-width="1.1"/></svg>
</div>
</div></body></html>
